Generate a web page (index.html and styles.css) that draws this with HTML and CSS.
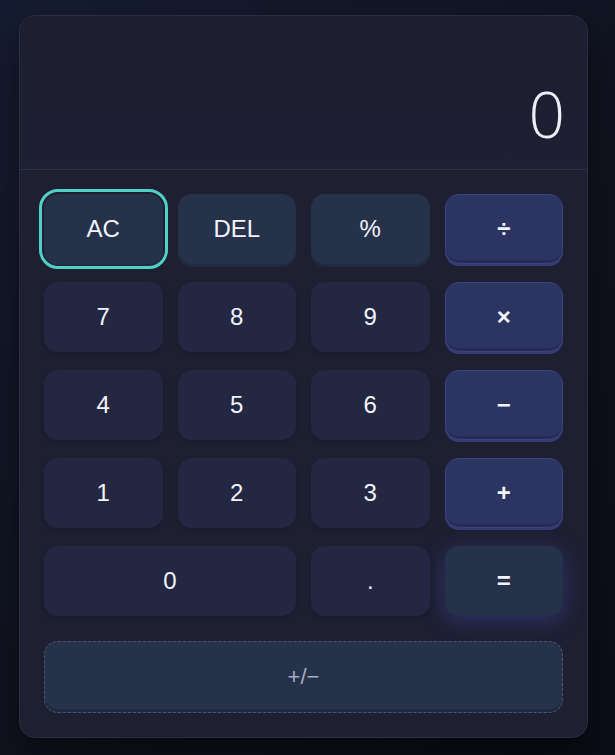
FILE: index.html
```html
<!DOCTYPE html>
<html lang="en">
<head>
<meta charset="utf-8">
<title>Calculator</title>
<link rel="stylesheet" href="styles.css">
</head>
<body>
<div class="calc">
  <div class="display"><span class="value">0</span></div>
  <div class="pad">
    <div class="keys">
      <button class="key fn focus">AC</button>
      <button class="key fn">DEL</button>
      <button class="key fn">%</button>
      <button class="key op">÷</button>
      <button class="key num">7</button>
      <button class="key num">8</button>
      <button class="key num">9</button>
      <button class="key op">×</button>
      <button class="key num">4</button>
      <button class="key num">5</button>
      <button class="key num">6</button>
      <button class="key op">−</button>
      <button class="key num">1</button>
      <button class="key num">2</button>
      <button class="key num">3</button>
      <button class="key op">+</button>
      <button class="key num wide">0</button>
      <button class="key num">.</button>
      <button class="key eq">=</button>
    </div>
    <button class="sign">+/−</button>
  </div>
</div>
</body>
</html>
```
FILE: styles.css
```css
* { box-sizing: border-box; }
html, body { margin: 0; height: 100%; }
body {
  background: linear-gradient(135deg, #161c32 0%, #10131f 55%, #0b0d17 100%);
  font-family: "Liberation Sans", Arial, sans-serif;
  padding: 15px 27px 17px 19px;
}
.calc {
  width: 569px;
  height: 723px;
  background: #1e1f31;
  border: 1px solid #2b2d42;
  border-radius: 16px;
  box-shadow: 0 20px 40px rgba(0,0,0,0.45);
  display: flex;
  flex-direction: column;
}
.display {
  height: 155px;
  border-bottom: 1px solid #2d2f44;
  display: flex;
  align-items: flex-end;
  justify-content: flex-end;
  padding: 0 22px 23px;
  border-radius: 16px 16px 0 0;
  background: linear-gradient(180deg, #1d1e30, #1e1f32);
}
.value {
  font-family: "Open Sans", sans-serif;
  font-weight: 300;
  font-size: 64px;
  line-height: 64px;
  color: #eceef5;
}
.pad {
  padding: 24px 24px 24px;
  display: flex;
  flex-direction: column;
}
.keys {
  display: grid;
  grid-template-columns: repeat(4, 1fr);
  column-gap: 15px;
  row-gap: 18px;
  grid-auto-rows: 70px;
}
.key {
  font-family: "Liberation Sans", Arial, sans-serif;
  font-size: 24px;
  color: #f2f4fa;
  border: none;
  border-radius: 14px;
  padding: 0;
  cursor: pointer;
}
.num {
  background: #242742;
  box-shadow: 0 2px 4px rgba(0,0,0,0.18);
}
.wide { grid-column: span 2; }
.fn {
  background: #263249;
  box-shadow: 0 3px 0 #212a3e;
}
.focus {
  outline: 3px solid #4fd1c5;
  outline-offset: 2px;
}
.op {
  background: #2c3462;
  border: 1px solid #3b4383;
  font-weight: bold;
  box-shadow: inset 0 -3px 0 rgba(0,0,0,0.14), 0 2px 0 #343c76;
}
.eq {
  background: #263249;
  font-weight: bold;
  box-shadow: 0 4px 22px rgba(80, 90, 220, 0.35);
}
.sign {
  margin-top: 25px;
  height: 72px;
  background: #263249;
  border: 1px dashed #4b5672;
  border-radius: 14px;
  box-shadow: inset 0 -3px 0 rgba(0,0,0,0.15);
  font-family: "Liberation Sans", Arial, sans-serif;
  font-size: 22px;
  color: #a4adc3;
  padding: 0;
}
```
